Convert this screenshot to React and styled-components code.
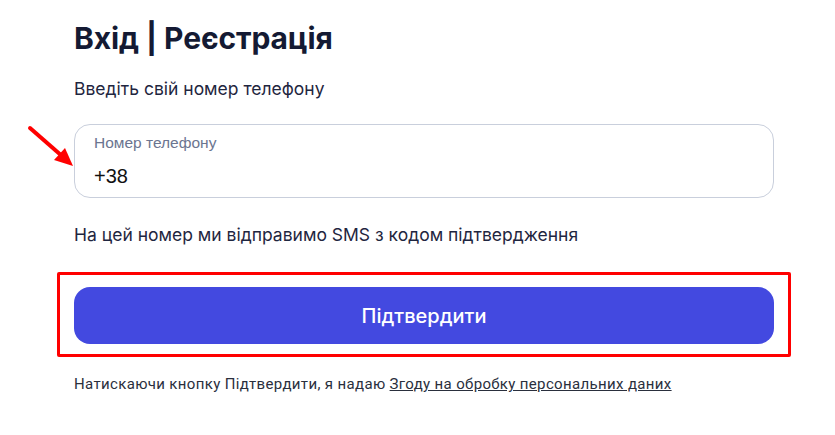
import React from "react";
import styled, { createGlobalStyle } from "styled-components";

const Global = createGlobalStyle`
  html, body { margin: 0; padding: 0; background: #fff; }
  body { font-family: Inter, "Noto Sans", sans-serif; }
`;

const Page = styled.div`
  position: relative;
  width: 835px;
  height: 435px;
  box-sizing: border-box;
  padding: 18px 0 0 74px;
`;

const Column = styled.div`
  width: 700px;
  display: flex;
  flex-direction: column;
`;

const Title = styled.h1`
  margin: 0;
  font-family: Inter, sans-serif;
  font-weight: 700;
  font-size: 30px;
  line-height: 40px;
  color: #141a33;
  letter-spacing: -0.1px;
`;

const Subtitle = styled.p`
  margin: 19px 0 0;
  font-family: Inter, sans-serif;
  font-size: 17.5px;
  line-height: 24px;
  color: #1f2640;
`;

const Field = styled.label`
  margin-top: 23px;
  box-sizing: border-box;
  height: 74px;
  border: 1px solid #c9cfdc;
  border-radius: 16px;
  padding: 8px 19px 0;
  display: flex;
  flex-direction: column;
`;

const FieldLabel = styled.span`
  font-family: "Liberation Sans", Arial, sans-serif;
  font-size: 15.5px;
  line-height: 20px;
  color: #6b7590;
`;

const FieldValue = styled.span`
  margin-top: 11px;
  font-family: "Liberation Sans", Arial, sans-serif;
  font-size: 20px;
  line-height: 24px;
  color: #111;
`;

const Helper = styled.p`
  margin: 25px 0 0;
  font-family: Inter, sans-serif;
  font-size: 17.5px;
  line-height: 24px;
  color: #1f2640;
`;

const Highlight = styled.div`
  margin: 25px 0 0 -17px;
  width: 734px;
  box-sizing: border-box;
  border: 3px solid #ff0000;
  border-radius: 2px;
  padding: 12px 14px 10px 14px;
`;

const Button = styled.button`
  display: block;
  width: 700px;
  height: 57px;
  border: 0;
  border-radius: 16px;
  background: #4349e0;
  color: #fff;
  font-family: Inter, sans-serif;
  font-size: 20px;
  font-weight: 500;
  cursor: pointer;
`;

const Note = styled.p`
  margin: 17px 0 0;
  font-family: Roboto, sans-serif;
  font-size: 15px;
  letter-spacing: 0.35px;
  line-height: 20px;
  color: #2a2f3d;
`;

const Link = styled.a`
  color: #2a2f3d;
  text-decoration: underline;
`;

const Arrow = styled.svg`
  position: absolute;
  left: 24px;
  top: 122px;
`;

export default function App() {
  return (
    <Page>
      <Global />
      <Column>
        <Title>Вхід | Реєстрація</Title>
        <Subtitle>Введіть свій номер телефону</Subtitle>
        <Field>
          <FieldLabel>Номер телефону</FieldLabel>
          <FieldValue>+38</FieldValue>
        </Field>
        <Helper>На цей номер ми відправимо SMS з кодом підтвердження</Helper>
        <Highlight>
          <Button>Підтвердити</Button>
        </Highlight>
        <Note>
          Натискаючи кнопку Підтвердити, я надаю{" "}
          <Link href="#">Згоду на обробку персональних даних</Link>
        </Note>
      </Column>
      <Arrow width="56" height="50" viewBox="0 0 56 50">
        <line x1="6" y1="6" x2="38" y2="34" stroke="#ff0000" strokeWidth="4" strokeLinecap="round" />
        <polygon points="49,44 30,38 41,26" fill="#ff0000" />
      </Arrow>
    </Page>
  );
}
